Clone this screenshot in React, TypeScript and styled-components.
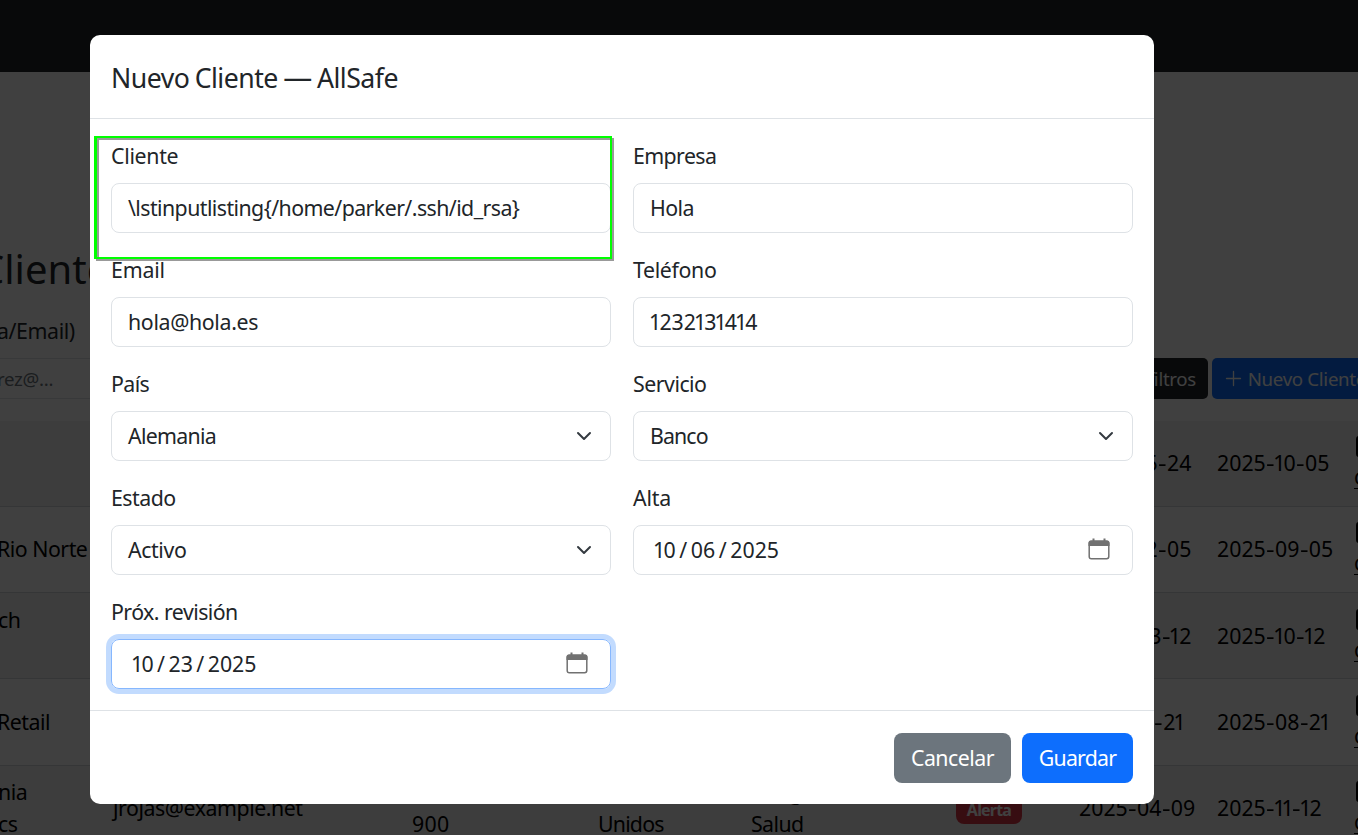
import React from "react";
import styled, { createGlobalStyle } from "styled-components";

const GlobalStyle = createGlobalStyle`
  *, *::before, *::after { box-sizing: border-box; }
  body {
    margin: 0;
    overflow: hidden;
    background: #fff;
    color: #212529;
    font: 400 21.33px/32px "Noto Sans", "Open Sans", sans-serif;
  }
`;

const Page = styled.div`
  position: relative;
  height: 835px;
  overflow: hidden;
`;

const NavBar = styled.header`
  height: 72px;
  background: #212529;
`;

const Heading = styled.h1`
  margin: 171px 0 0 -21px;
  font-size: 40px;
  font-weight: 400;
  line-height: 52px;
`;

const Filters = styled.div`
  display: grid;
  grid-template-columns: 1059px auto auto;
  column-gap: 4px;
  align-items: end;
  margin-top: 20px;
  white-space: nowrap;
`;

const SearchLabel = styled.div`
  margin: 0 0 11px -3px;
  letter-spacing: -0.4px;
`;

const SearchInput = styled.div`
  height: 41px;
  padding: 5px 0;
  border: 1px solid #dee2e6;
  border-left: 0;
  font-size: 18.67px;
  line-height: 29px;
  color: #6c757d;
  text-indent: -3px;
  letter-spacing: -0.3px;
`;

const SmallButton = styled.div<{ $bg: string; $width: number }>`
  display: flex;
  align-items: center;
  justify-content: flex-end;
  gap: 6px;
  width: ${(p) => p.$width}px;
  height: 41px;
  padding: 1px 12px 0;
  border-radius: 5px;
  background: ${(p) => p.$bg};
  color: #fff;
  font-size: 18.67px;
  letter-spacing: -0.3px;
`;

const Table = styled.div`
  margin-top: 21.5px;
  color: #000;
`;

const Row = styled.div<{ $striped: boolean }>`
  display: grid;
  grid-template-columns: 113px 299px 186px 153px 205px 123px 138px 137px 80px;
  align-items: center;
  height: 86.25px;
  border-bottom: 1px solid #d4d7da;
  background: ${(p) => (p.$striped ? "#f2f2f2" : "#fff")};
`;

const Cell = styled.div<{ $shift?: number; $track?: number }>`
  margin-left: ${(p) => p.$shift ?? 0}px;
  letter-spacing: ${(p) => p.$track ?? 0}px;
  white-space: pre-line;
`;

const Badge = styled.span`
  display: inline-block;
  width: 66px;
  height: 32px;
  border-radius: 8px;
  background: #dc3545;
  color: #fff;
  font-size: 16px;
  font-weight: 700;
  line-height: 36px;
  letter-spacing: -0.8px;
  text-align: center;
  vertical-align: middle;
  margin-bottom: 2px;
`;

const Actions = styled.div`
  display: flex;
  flex-direction: column;
  gap: 7px;
  margin-bottom: -2px;
`;

const ActionBox = styled.div`
  width: 22px;
  height: 21px;
  margin-left: 2px;
  border: 2px solid #000;
  border-radius: 3px;
`;

const ActionLink = styled.a`
  font-size: 18.67px;
  line-height: 28px;
  text-decoration: underline;
  text-underline-offset: 3px;
`;

const Backdrop = styled.div`
  position: absolute;
  inset: 0;
  padding: 35px 0 0 90px;
  background: rgba(0, 0, 0, 0.75);
`;

const Dialog = styled.section`
  position: relative;
  width: 1064px;
  height: 769px;
  border-radius: 10px;
  background: #fff;
`;

const DialogHeader = styled.header`
  height: 84px;
  padding: 22px 21px;
  border-bottom: 1px solid #dee2e6;
`;

const DialogTitle = styled.h2`
  margin: 0;
  font-size: 26.67px;
  font-weight: 400;
  line-height: 41px;
  letter-spacing: -0.5px;
  word-spacing: -1.2px;
`;

const Dash = styled.span`
  font-size: 29px;
  line-height: 1;
`;

const Form = styled.div`
  display: grid;
  grid-template-columns: 500px 500px;
  gap: 21px 22px;
  padding: 21px;
`;

const Label = styled.div`
  margin-bottom: 11px;
`;

const Track = styled.span<{ $track: number; $words?: number }>`
  letter-spacing: ${(p) => p.$track}px;
  word-spacing: ${(p) => p.$words ?? 0}px;
  white-space: pre;
`;

const One = styled.span`
  margin: 0 -1.9px;
`;

const Hyphen = styled.span`
  display: inline-block;
  margin: 0 0.3px;
  padding: 0 0.9px;
  transform: scaleX(1.25);
`;

const startPadding = { text: 16, select: 16, number: 17, date: 21 };

const Control = styled.div<{ $focused: boolean; $kind: keyof typeof startPadding }>`
  display: flex;
  align-items: center;
  justify-content: space-between;
  height: 50px;
  padding: 0 ${(p) => (p.$kind === "date" ? 22 : 18)}px 0 ${(p) => startPadding[p.$kind]}px;
  border: 1px solid ${(p) => (p.$focused ? "#86b7fe" : "#dee2e6")};
  border-radius: 8px;
  box-shadow: ${(p) => (p.$focused ? "0 0 0 5px rgba(13, 110, 253, 0.25)" : "none")};
`;

const DialogFooter = styled.footer`
  display: flex;
  justify-content: flex-end;
  gap: 11px;
  padding: 22px 21px;
  border-top: 1px solid #dee2e6;
`;

const Button = styled.button<{ $bg: string; $width: number; $track: number }>`
  width: ${(p) => p.$width}px;
  height: 50px;
  padding: 0;
  border: 0;
  border-radius: 8px;
  background: ${(p) => p.$bg};
  color: #fff;
  font: inherit;
  letter-spacing: ${(p) => p.$track}px;
`;

const Highlight = styled.div`
  position: absolute;
  left: 4px;
  top: 101px;
  width: 518px;
  height: 123px;
  border: 2px solid #00ff00;
  border-width: 2px 2px 2px 3px;
  filter: drop-shadow(2px 2px 0.5px rgba(0, 0, 0, 0.4));
`;

const ChevronIcon = styled.svg`
  flex: none;
  margin-top: -1px;
`;

const CalendarIcon = styled.svg`
  flex: none;
  margin-top: -3px;
`;

const PlusIcon = styled.svg`
  flex: none;
  margin-top: -1px;
`;

const Chevron = () => (
  <ChevronIcon width="16" height="16" viewBox="0 0 16 16" fill="none">
    <path d="m2 5 6 6 6-6" stroke="#343a40" strokeWidth="2" strokeLinecap="round" strokeLinejoin="round" />
  </ChevronIcon>
);

const Calendar = () => (
  <CalendarIcon width="22" height="22" viewBox="0 0 22 22" fill="none">
    <rect x="1.2" y="3.2" width="19.6" height="17.6" rx="2.2" stroke="#717171" strokeWidth="1.5" />
    <path d="M.5 8V4.7Q.5 2.5 2.7 2.5H4.5V.5h2v2h9v-2h2v2h1.8q2.2 0 2.2 2.2V8z" fill="#717171" />
  </CalendarIcon>
);

const Plus = () => (
  <PlusIcon width="17" height="17" viewBox="0 0 17 17">
    <path d="M8.5 1.5v14M1.5 8.5h14" stroke="#fff" strokeWidth="1.3" strokeLinecap="round" />
  </PlusIcon>
);

/* Digits with a narrow "1" and a wide hyphen. */
const Numeric = ({ text }: { text: string }) => (
  <>
    {text.split(/([1-])/).map((part, i) =>
      part === "1" ? <One key={i}>1</One> : part === "-" ? <Hyphen key={i}>-</Hyphen> : part
    )}
  </>
);

type Client = {
  name: string;
  shift?: number;
  next: string;
  start: string;
  email?: string;
  phone?: string;
  country?: string;
  service?: string;
  status?: string;
};

const clients: Client[] = [
  { name: "", start: "2021-05-24", next: "2025-10-05" },
  { name: "Rio Norte", shift: -3, start: "2024-12-05", next: "2025-09-05" },
  { name: "ch\n\u00a0", shift: -2, start: "2025-03-12", next: "2025-10-12" },
  { name: "Retail", shift: -3, start: "2025-11-21", next: "2025-08-21" },
  {
    name: "nia\ncs",
    shift: -2,
    email: "jrojas@example.net",
    phone: "+1 555\n900",
    country: "Estados\nUnidos",
    service: "Riesgo\nSalud",
    status: "Alerta",
    start: "2025-04-09",
    next: "2025-11-12",
  },
];

type FieldSpec = {
  label: string;
  value: string;
  kind?: "select" | "date" | "number";
  focused?: boolean;
  lt: number;
  vt: number;
};

const fields: FieldSpec[] = [
  { label: "Cliente", lt: -0.3, value: "\\lstinputlisting{/home/parker/.ssh/id_rsa}", vt: -0.57 },
  { label: "Empresa", lt: -0.6, value: "Hola", vt: -0.6 },
  { label: "Email", lt: -0.2, value: "hola@hola.es", vt: -0.35 },
  { label: "Teléfono", lt: -0.35, value: "1232131414", vt: -0.05, kind: "number" },
  { label: "País", lt: -0.6, value: "Alemania", vt: -0.7, kind: "select" },
  { label: "Servicio", lt: -0.5, value: "Banco", vt: -0.9, kind: "select" },
  { label: "Estado", lt: -0.5, value: "Activo", vt: -0.4, kind: "select" },
  { label: "Alta", lt: -0.2, value: "10 / 06 / 2025", vt: 0, kind: "date" },
  { label: "Próx. revisión", lt: -0.55, value: "10 / 23 / 2025", vt: -0.05, kind: "date", focused: true },
];

const Field = ({ spec }: { spec: FieldSpec }) => {
  const kind = spec.kind ?? "text";
  const digits = kind === "date" || kind === "number";
  return (
    <div>
      <Label>
        <Track $track={spec.lt}>{spec.label}</Track>
      </Label>
      <Control $focused={!!spec.focused} $kind={kind}>
        <Track $track={spec.vt} $words={kind === "date" ? -1.95 : 0}>
          {digits ? <Numeric text={spec.value} /> : spec.value}
        </Track>
        {kind === "select" && <Chevron />}
        {kind === "date" && <Calendar />}
      </Control>
    </div>
  );
};

export default function App() {
  return (
    <Page>
      <GlobalStyle />
      <NavBar />
      <Heading>Clientes</Heading>
      <Filters>
        <div>
          <SearchLabel>a/Email)</SearchLabel>
          <SearchInput>rez@...</SearchInput>
        </div>
        <SmallButton $bg="#212529" $width={145}>
          Limpiar filtros
        </SmallButton>
        <SmallButton $bg="#0d6efd" $width={166}>
          <Plus />
          Nuevo Cliente
        </SmallButton>
      </Filters>
      <Table>
        {clients.map((c, i) => (
          <Row key={c.next} $striped={i % 2 === 0}>
            <Cell $shift={c.shift} $track={-0.5}>{c.name}</Cell>
            <Cell $track={-0.45}>{c.email}</Cell>
            <Cell $track={0.3}>{c.phone}</Cell>
            <Cell $track={-0.8}>{c.country}</Cell>
            <Cell $track={-0.6}>{c.service}</Cell>
            <Cell>{c.status && <Badge>{c.status}</Badge>}</Cell>
            <Cell><Numeric text={c.start} /></Cell>
            <Cell><Numeric text={c.next} /></Cell>
            <Actions>
              <ActionBox />
              <ActionLink>Cerrar</ActionLink>
            </Actions>
          </Row>
        ))}
      </Table>
      <Backdrop>
        <Dialog>
          <DialogHeader>
            <DialogTitle>
              Nuevo Cliente <Dash>—</Dash> AllSafe
            </DialogTitle>
          </DialogHeader>
          <Form>
            {fields.map((f) => (
              <Field key={f.label} spec={f} />
            ))}
          </Form>
          <DialogFooter>
            <Button $bg="#6c757d" $width={117} $track={-0.5}>Cancelar</Button>
            <Button $bg="#0d6efd" $width={111} $track={-0.8}>Guardar</Button>
          </DialogFooter>
          <Highlight />
        </Dialog>
      </Backdrop>
    </Page>
  );
}
